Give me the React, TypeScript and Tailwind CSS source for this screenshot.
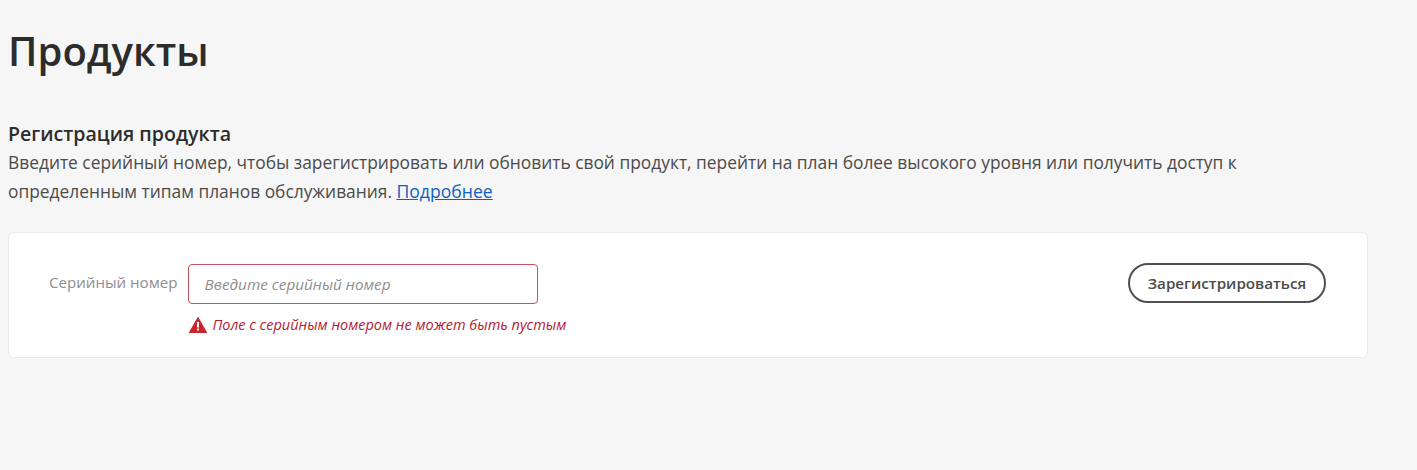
export default function App() {
    return (
        <div className="min-h-[470px] bg-[#f6f6f6] px-2 font-['Open_Sans',sans-serif] text-[#4b4b4b]">
            <h1 className="pt-[24px] text-[40px] leading-[54px] font-semibold text-[#2c2c2c]">Продукты</h1>

            <h2 className="mt-[42px] text-[19.6px] leading-[28px] font-semibold text-[#2c2c2c]">Регистрация продукта</h2>
            <p className="w-[1300px] text-[17.36px] leading-[29px]">
                Введите серийный номер, чтобы зарегистрировать или обновить свой продукт, перейти на план более высокого уровня или получить доступ к определенным типам планов обслуживания.{" "}
                <a href="#" className="text-[17.6px] text-[#0d5fc2] underline">
                    Подробнее
                </a>
            </p>

            <div className="mt-[26px] flex h-[126px] w-[1360px] items-start justify-between rounded-[6px] border border-[#eaeaea] bg-white pt-[30px] pr-[41px] pl-[40px]">
                <div className="mt-px flex items-start">
                    <label className="mt-[8px] mr-[11px] text-[15.1px] leading-[21px] text-[#8e8e8e]">Серийный номер</label>
                    <div>
                        <div className="flex h-[40px] w-[350px] items-center rounded-[4px] border border-[#c9515e] px-[15px] text-[15.3px] text-[#8e8e8e] italic">
                            Введите серийный номер
                        </div>
                        <div className="mt-[11px] flex items-center gap-[5px] pl-[1px] text-[14.5px] leading-[20px] whitespace-nowrap text-[#b5202f] italic">
                            <svg width="18" height="16" viewBox="0 0 18 16" className="shrink-0">
                                <path d="M9 0.5 L17.6 15.5 L0.4 15.5 Z" fill="#c9252d" stroke="#c9252d" strokeLinejoin="round" />
                                <rect x="8" y="5" width="2" height="5.5" fill="#fff" />
                                <rect x="8" y="11.5" width="2" height="2" fill="#fff" />
                            </svg>
                            Поле с серийным номером не может быть пустым
                        </div>
                    </div>
                </div>
                <button className="h-[40px] w-[198px] rounded-full border-2 border-[#505050] text-[15.2px] font-semibold text-[#4b4b4b]">
                    Зарегистрироваться
                </button>
            </div>
        </div>
    );
}
